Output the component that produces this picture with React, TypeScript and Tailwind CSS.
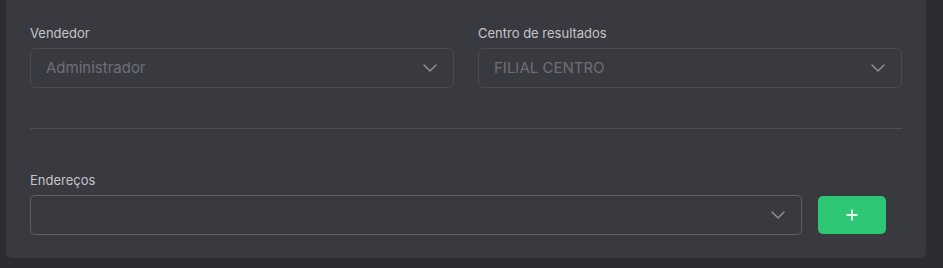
import React from "react";

function Chevron() {
  return (
    <svg width="14" height="8" viewBox="0 0 14 8" fill="none" className="shrink-0">
      <path d="M1 1l6 6 6-6" stroke="#8b8c92" strokeWidth="1.5" strokeLinecap="round" strokeLinejoin="round" />
    </svg>
  );
}

function Select({ value, strong }: { value?: string; strong?: boolean }) {
  return (
    <div
      className={`flex h-[40px] items-center justify-between rounded-[5px] border pl-[15px] pr-[16px] ${
        strong ? "border-[#606167]" : "border-[#4b4c52]"
      } bg-[#393a40]`}
    >
      <span className="text-[15px] text-[#6e6f75]">{value ?? ""}</span>
      <Chevron />
    </div>
  );
}

export default function App() {
  return (
    <div
      className="h-[268px] w-[943px] bg-[#2c2d32] pl-[6px] pr-[17px]"
      style={{ fontFamily: "Inter, 'Noto Sans', sans-serif" }}
    >
      <div className="rounded-b-[6px] bg-[#393a40] px-[24px] pt-[23px] pb-[23px]">
        <div className="grid grid-cols-2 gap-[24px]">
          <div>
            <div className="mb-[5px] h-[20px] text-[13px] leading-[20px] text-[#c4c5c9]">Vendedor</div>
            <Select value="Administrador" />
          </div>
          <div>
            <div className="mb-[5px] h-[20px] text-[13px] leading-[20px] text-[#c4c5c9]">Centro de resultados</div>
            <Select value="FILIAL CENTRO" />
          </div>
        </div>
        <div className="mt-[40px] h-px bg-[#4f5056]" />
        <div className="mt-[41px] h-[20px] text-[13px] leading-[20px] text-[#c4c5c9]">Endereços</div>
        <div className="mt-[5px] flex items-center gap-[16px]">
          <div className="flex-1">
            <Select strong />
          </div>
          <button className="flex h-[38px] w-[68px] items-center justify-center rounded-[5px] bg-[#2ec776] mr-[16px]">
            <svg width="12" height="12" viewBox="0 0 12 12">
              <path d="M6 0.5v11M0.5 6h11" stroke="#e6f7ee" strokeWidth="1.8" />
            </svg>
          </button>
        </div>
      </div>
    </div>
  );
}
